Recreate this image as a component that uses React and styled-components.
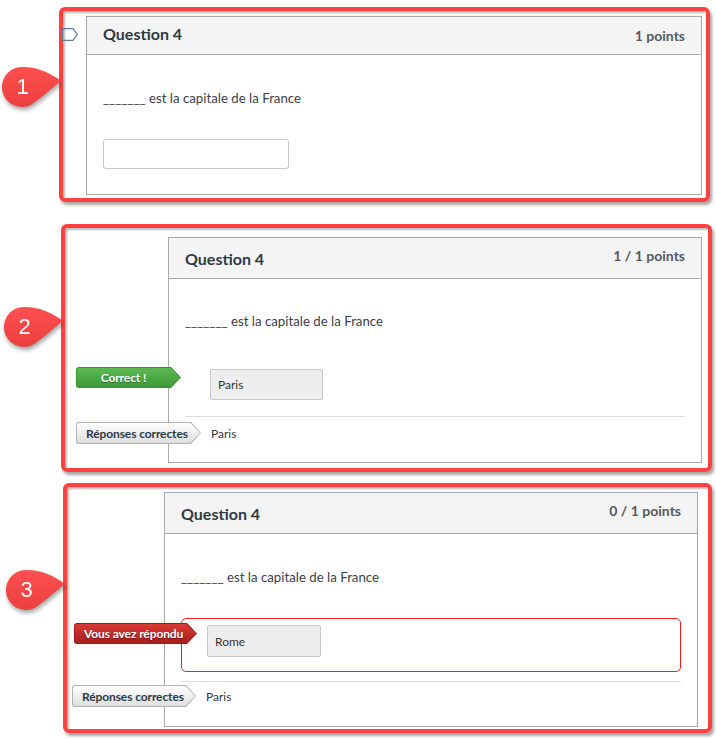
import React from "react";
import styled, { createGlobalStyle, css } from "styled-components";

const GlobalStyle = createGlobalStyle`
  html, body { margin: 0; padding: 0; background: #ffffff; }
  body { font-family: Lato, "Open Sans", "Liberation Sans", sans-serif; color: #2d3b45; }
  * { box-sizing: border-box; }
`;

const Page = styled.div`
  width: 716px;
  height: 739px;
  padding-top: 7px;
  display: flex;
  flex-direction: column;
  overflow: hidden;
`;

const Frame = styled.section`
  position: relative;
  display: flex;
  margin-left: ${(p) => p.$left}px;
  margin-top: ${(p) => p.$top}px;
  width: ${(p) => p.$width}px;
  height: ${(p) => p.$height}px;
  padding: ${(p) => p.$pad};
  border: 4px solid #ff4141;
  border-radius: 6px;
  box-shadow: 2px 3px 3px rgba(0, 0, 0, 0.35), inset 2px 2px 2px rgba(0, 0, 0, 0.28);
`;

const Gutter = styled.div`
  width: 23px;
  flex: none;
  padding-top: 12px;
`;

const Card = styled.div`
  flex: 1;
  display: flex;
  flex-direction: column;
  border: 1px solid #a9a9a9;
  background: #fff;
`;

const Header = styled.header`
  height: ${(p) => p.$h}px;
  flex: none;
  display: flex;
  align-items: center;
  justify-content: space-between;
  padding: 0 16px;
  background: #f4f4f4;
  border-bottom: 1px solid #a9a9a9;
`;

const Title = styled.h3`
  margin: ${(p) => p.$shift || 0}px 0 0 0;
  font-size: 16px;
  font-weight: 700;
  color: #2d3b45;
`;

const Points = styled.span`
  font-size: 14px;
  font-weight: 700;
  color: #555a5e;
  margin-top: ${(p) => p.$shift || 0}px;
`;

const Body = styled.div`
  display: flex;
  flex-direction: column;
  align-items: flex-start;
  padding: ${(p) => p.$top}px 16px 0 16px;
`;

const Prompt = styled.p`
  margin: 0;
  font-size: 13.25px;
  line-height: 20px;
  color: #3b4147;
`;

const TextInput = styled.input`
  margin-top: 31px;
  width: 186px;
  height: 30px;
  border: 1px solid #c8c8c8;
  border-radius: 3px;
  background: #fff;
  padding: 0 8px;
  font: 13px Lato, sans-serif;
`;

const AnswerRow = styled.div`
  position: relative;
  align-self: stretch;
  margin-top: ${(p) => p.$top}px;
  padding-left: 25px;
`;

const WrongBox = styled.div`
  position: relative;
  align-self: stretch;
  margin-top: 31px;
  height: 54px;
  border: 1px solid #ff1a1a;
  border-radius: 5px;
  padding: 6px 0 0 25px;
`;

const AnswerBox = styled.div`
  width: ${(p) => p.$w}px;
  height: ${(p) => p.$h}px;
  display: flex;
  align-items: center;
  padding-left: 7px;
  background: #eeeeee;
  border: 1px solid #c9c9c9;
  border-radius: 2px;
  font-size: 12px;
  color: #333;
`;

const Divider = styled.hr`
  align-self: stretch;
  margin: ${(p) => p.$top}px 0 0 0;
  border: 0;
  border-top: 1px solid #dddddd;
  height: 0;
`;

const CorrectRow = styled.div`
  position: relative;
  align-self: stretch;
  margin-top: ${(p) => p.$top}px;
  height: 22px;
  display: flex;
  align-items: center;
  padding-left: ${(p) => p.$indent}px;
  font-size: 12px;
  color: #3a3340;
`;

const tones = {
  green: css`
    --edge: #3a8f33;
    --fill: linear-gradient(#5cb851, #3f9b37);
    color: #fff;
    text-shadow: 0 1px 1px rgba(0, 0, 0, 0.35);
  `,
  red: css`
    --edge: #9c1b1b;
    --fill: linear-gradient(#d93a35, #a81e1e);
    color: #fff;
    text-shadow: 0 1px 1px rgba(0, 0, 0, 0.4);
  `,
  gray: css`
    --edge: #b3b3b3;
    --fill: linear-gradient(#ffffff, #dedede);
    color: #2d3b45;
  `,
};

const Tag = styled.div`
  position: absolute;
  left: ${(p) => p.$left}px;
  top: ${(p) => p.$top}px;
  width: ${(p) => p.$w}px;
  height: ${(p) => p.$h}px;
  padding: 1px;
  ${(p) => tones[p.$tone]};
  background: var(--edge);
  border-radius: 3px 0 0 3px;
  clip-path: polygon(0 0, calc(100% - 10px) 0, 100% 50%, calc(100% - 10px) 100%, 0 100%);
`;

const TagFace = styled.span`
  display: flex;
  align-items: center;
  justify-content: ${(p) => (p.$center ? "center" : "flex-start")};
  height: 100%;
  padding: ${(p) => (p.$center ? "0 14px 0 4px" : "0 0 0 9px")};
  background: var(--fill);
  border-radius: 2px 0 0 2px;
  clip-path: polygon(0 0, calc(100% - 9.6px) 0, 100% 50%, calc(100% - 9.6px) 100%, 0 100%);
  font-size: 12px;
  font-weight: 700;
  white-space: nowrap;
  letter-spacing: -0.1px;
`;

const Marker = styled.div`
  position: absolute;
  left: -63px;
  top: ${(p) => p.$top}px;
  width: 64px;
  height: 46px;
  filter: drop-shadow(1px 3px 2px rgba(0, 0, 0, 0.35));
  z-index: 2;
`;

const MarkerShape = styled.svg`
  position: absolute;
  inset: 0;
  display: block;
`;

const MarkerNum = styled.span`
  position: absolute;
  left: 0;
  top: 0;
  width: 45px;
  height: 46px;
  display: flex;
  align-items: center;
  justify-content: center;
  color: #fff;
  font-family: "Liberation Sans", Arial, sans-serif;
  font-size: 22px;
`;

function StepMarker({ n, top }) {
  return (
    <Marker $top={top}>
      <MarkerShape width="64" height="46" viewBox="0 0 64 46">
        <defs>
          <linearGradient id={`mg${n}`} x1="0" y1="0" x2="0" y2="1">
            <stop offset="0" stopColor="#ff5050" />
            <stop offset="1" stopColor="#ec3e3e" />
          </linearGradient>
        </defs>
        <path
          d="M61 17 C50 9 38 3 22 3 A20 20 0 1 0 36.1 37.1 C46 30 54 22 61 17 Z"
          fill={`url(#mg${n})`}
        />
      </MarkerShape>
      <MarkerNum>{n}</MarkerNum>
    </Marker>
  );
}

function FlagIcon() {
  return (
    <svg width="16" height="13" viewBox="0 0 16 13" style={{ display: "block", marginLeft: "-1px" }}>
      <path d="M0.6 0.6 H11 L15.2 6.5 L11 12.4 H0.6 Z" fill="none" stroke="#5b7e9f" strokeWidth="1.2" />
    </svg>
  );
}

const PROMPT = "_______ est la capitale de la France";

export default function App() {
  return (
    <>
      <GlobalStyle />
      <Page>
        <Frame $left={59} $top={0} $width={651} $height={195} $pad="5px 4px 3px 0">
          <StepMarker n={1} top={53} />
          <Gutter>
            <FlagIcon />
          </Gutter>
          <Card>
            <Header $h={38}>
              <Title $shift={-5}>Question 4</Title>
              <Points $shift={-1}>1 points</Points>
            </Header>
            <Body $top={33}>
              <Prompt>{PROMPT}</Prompt>
              <TextInput type="text" aria-label="Réponse" />
            </Body>
          </Card>
        </Frame>

        <Frame $left={61} $top={22} $width={651} $height={248} $pad="9px 6px 5px 103px">
          <StepMarker n={2} top={76} />
          <Card>
            <Header $h={41}>
              <Title>Question 4</Title>
              <Points $shift={-5}>1 / 1 points</Points>
            </Header>
            <Body $top={32}>
              <Prompt>{PROMPT}</Prompt>
              <AnswerRow $top={38}>
                <Tag $tone="green" $left={-109} $top={-2} $w={105} $h={21}>
                  <TagFace $center>Correct !</TagFace>
                </Tag>
                <AnswerBox $w={113} $h={31}>Paris</AnswerBox>
              </AnswerRow>
              <Divider $top={16} />
              <CorrectRow $top={5} $indent={26}>
                <Tag $tone="gray" $left={-109} $top={0} $w={125} $h={22}>
                  <TagFace>Réponses correctes</TagFace>
                </Tag>
                Paris
              </CorrectRow>
            </Body>
          </Card>
        </Frame>

        <Frame $left={63} $top={11} $width={649} $height={250} $pad="5px 10px 2px 97px">
          <StepMarker n={3} top={80} />
          <Card>
            <Header $h={41}>
              <Title>Question 4</Title>
              <Points $shift={-5}>0 / 1 points</Points>
            </Header>
            <Body $top={33}>
              <Prompt>{PROMPT}</Prompt>
              <WrongBox>
                <Tag $tone="red" $left={-108} $top={4} $w={123} $h={21}>
                  <TagFace>Vous avez répondu</TagFace>
                </Tag>
                <AnswerBox $w={114} $h={32}>Rome</AnswerBox>
              </WrongBox>
              <Divider $top={9} />
              <CorrectRow $top={3} $indent={25}>
                <Tag $tone="gray" $left={-109} $top={0} $w={124} $h={22}>
                  <TagFace>Réponses correctes</TagFace>
                </Tag>
                Paris
              </CorrectRow>
            </Body>
          </Card>
        </Frame>
      </Page>
    </>
  );
}
